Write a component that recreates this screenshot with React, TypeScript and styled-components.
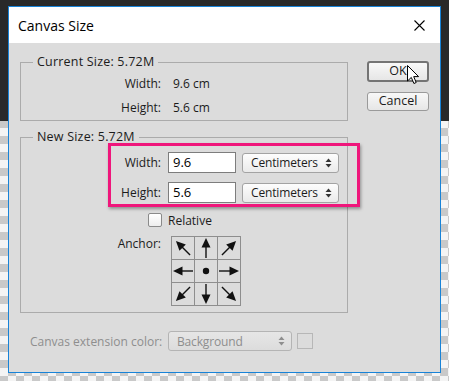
import React from 'react';
import styled, { createGlobalStyle } from 'styled-components';

const GlobalStyle = createGlobalStyle`
  html, body { margin: 0; padding: 0; }
  body { font-family: "Open Sans", "Noto Sans", sans-serif; color: #1b1b1b; }
`;

const Desktop = styled.div`
  width: 449px;
  height: 381px;
  box-sizing: border-box;
  padding: 6px 0 0 8px;
  overflow: hidden;
  background:
    linear-gradient(#292929, #292929) 0 0 / 100% 121px no-repeat,
    linear-gradient(45deg, #c9c9c9 25%, transparent 25%, transparent 75%, #c9c9c9 75%) 0 0 / 16px 16px,
    linear-gradient(45deg, #c9c9c9 25%, transparent 25%, transparent 75%, #c9c9c9 75%) 8px 8px / 16px 16px,
    #f4f4f4;
`;

const Window = styled.div`
  width: 433px;
  height: 367px;
  box-sizing: border-box;
  border: 1px solid #1883d7;
  display: flex;
  flex-direction: column;
`;

const TitleBar = styled.header`
  height: 36px;
  flex: none;
  background: #ffffff;
  display: flex;
  align-items: center;
  justify-content: space-between;
  padding: 0 15px 0 9px;
`;

const Title = styled.h1`
  margin: 0;
  font-size: 14px;
  font-weight: 400;
  color: #000;
`;

const Body = styled.section`
  flex: 1;
  position: relative;
  background: #dcdcdc;
  display: flex;
  gap: 19px;
  padding: 11px 11px 0 11px;
  font-size: 12px;
`;

const LeftCol = styled.div`
  width: 328px;
  display: flex;
  flex-direction: column;
`;

const Group = styled.fieldset<{ $top?: number }>`
  margin: ${p => p.$top ?? 0}px 0 0 0;
  padding: 0;
  border: 1px solid #ababab;
  min-width: 0;
`;

const Legend = styled.legend`
  margin-left: 12px;
  padding: 0 4px;
  line-height: 16px;
  font-size: 12.5px;
  letter-spacing: 0.2px;
`;

const InfoGrid = styled.div`
  display: grid;
  grid-template-columns: 140px auto;
  column-gap: 12px;
  grid-auto-rows: 24px;
  align-items: center;
  padding: 1px 0;
`;

const Label = styled.span`
  text-align: right;
  white-space: nowrap;
`;

const NewContent = styled.div`
  padding: 7px 0 6px 0;
  display: flex;
  flex-direction: column;
`;

const FormGrid = styled.div`
  display: grid;
  grid-template-columns: 140px auto;
  column-gap: 7px;
  row-gap: 9px;
  grid-auto-rows: 21px;
  align-items: center;
`;

const Fields = styled.div`
  display: flex;
  gap: 6px;
  align-items: center;
`;

const TextInput = styled.div`
  width: 68px;
  height: 21px;
  box-sizing: border-box;
  background: #fff;
  border: 1px solid #7d7d7d;
  padding-left: 4px;
  font-size: 13px;
  line-height: 19px;
  color: #000;
`;

const Dropdown = styled.div<{ $width: number; $disabled?: boolean }>`
  width: ${p => p.$width}px;
  height: 20px;
  box-sizing: border-box;
  border: 1px solid ${p => (p.$disabled ? '#b4b4b4' : '#a3a3a3')};
  border-radius: 3px;
  background: ${p => (p.$disabled ? 'linear-gradient(#e6e6e6, #dcdcdc)' : 'linear-gradient(#fdfdfd, #eaeaea)')};
  display: flex;
  align-items: center;
  justify-content: space-between;
  padding: 0 6px 0 8px;
  font-size: 12px;
  letter-spacing: -0.15px;
  color: ${p => (p.$disabled ? '#8e8e8e' : '#1b1b1b')};
`;

const CheckRow = styled.label`
  margin-top: 10px;
  padding-left: 127px;
  display: flex;
  align-items: center;
  gap: 6px;
  height: 14px;
`;

const CheckBox = styled.span`
  width: 14px;
  height: 14px;
  box-sizing: border-box;
  border: 1px solid #8a8a8a;
  border-radius: 2px;
  background: linear-gradient(#ffffff, #ededed);
`;

const AnchorRow = styled.div`
  margin-top: 9px;
  display: grid;
  grid-template-columns: 140px auto;
  column-gap: 10px;
  align-items: start;
`;

const AnchorLabel = styled(Label)`
  line-height: 16px;
`;

const AnchorGrid = styled.div`
  width: 70px;
  display: grid;
  grid-template-columns: repeat(3, 22px);
  grid-auto-rows: 22px;
  gap: 1px;
  padding: 1px;
  box-sizing: border-box;
  background: #8e8e8e;
`;

const AnchorCell = styled.div`
  background: #dcdcdc;
  display: flex;
  align-items: center;
  justify-content: center;
`;

const ExtensionRow = styled.div`
  margin-top: 18px;
  padding-left: 10px;
  display: flex;
  align-items: center;
  gap: 7px;
  color: #8e8e8e;
`;

const ExtLabel = styled.span`
  width: 131px;
  text-align: right;
  white-space: nowrap;
`;

const Swatch = styled.span`
  margin-left: -2px;
  width: 16px;
  height: 16px;
  box-sizing: border-box;
  border: 1px solid #b7b7b7;
`;

const ButtonCol = styled.div`
  width: 62px;
  padding-top: 7px;
  display: flex;
  flex-direction: column;
  gap: 10px;
`;

const Button = styled.button<{ $default?: boolean }>`
  height: ${p => (p.$default ? 21 : 19)}px;
  padding: 0;
  font-family: inherit;
  font-size: 12.5px;
  color: #1b1b1b;
  border: ${p => (p.$default ? '2px solid #747474' : '1px solid #9a9a9a')};
  border-radius: 3px;
  background: linear-gradient(#f8f8f8, #e6e6e6);
  line-height: 1;
`;

const Highlight = styled.div`
  position: absolute;
  left: 99px;
  top: 100px;
  width: 252px;
  height: 64px;
  box-sizing: border-box;
  border: 3px solid #ef167b;
  box-shadow: 1px 2px 3px rgba(0, 0, 0, 0.35);
  pointer-events: none;
`;

const Pointer = styled.svg`
  position: absolute;
  left: 398px;
  top: 22px;
`;

function SpinArrows({ color }: { color: string }) {
  return (
    <svg width="7" height="10" viewBox="0 0 7 10">
      <path d="M0.5 4 L3.5 0.5 L6.5 4 Z" fill={color} />
      <path d="M0.5 6 L3.5 9.5 L6.5 6 Z" fill={color} />
    </svg>
  );
}

function Arrow({ angle }: { angle: number }) {
  return (
    <svg width="22" height="22" viewBox="0 0 22 22">
      <g transform={`rotate(${angle} 11 11)`}>
        <path d="M11 1 L6.5 10.5 L15.5 10.5 Z" fill="#111" />
        <line x1="11" y1="9" x2="11" y2="21" stroke="#111" strokeWidth="1.4" />
      </g>
    </svg>
  );
}

const anchors: (number | null)[] = [-45, 0, 45, -90, null, 90, -135, 180, 135];

export default function App() {
  return (
    <>
      <GlobalStyle />
      <Desktop>
        <Window>
          <TitleBar>
            <Title>Canvas Size</Title>
            <svg width="11" height="11" viewBox="0 0 11 11">
              <path d="M0.5 0.5 L10.5 10.5 M10.5 0.5 L0.5 10.5" stroke="#000" strokeWidth="1.1" />
            </svg>
          </TitleBar>
          <Body>
            <LeftCol>
              <Group>
                <Legend>Current Size: 5.72M</Legend>
                <InfoGrid>
                  <Label>Width:</Label>
                  <span>9.6 cm</span>
                  <Label>Height:</Label>
                  <span>5.6 cm</span>
                </InfoGrid>
              </Group>
              <Group $top={8}>
                <Legend>New Size: 5.72M</Legend>
                <NewContent>
                  <FormGrid>
                    <Label>Width:</Label>
                    <Fields>
                      <TextInput>9.6</TextInput>
                      <Dropdown $width={97}>
                        Centimeters
                        <SpinArrows color="#333" />
                      </Dropdown>
                    </Fields>
                    <Label>Height:</Label>
                    <Fields>
                      <TextInput>5.6</TextInput>
                      <Dropdown $width={97}>
                        Centimeters
                        <SpinArrows color="#333" />
                      </Dropdown>
                    </Fields>
                  </FormGrid>
                  <CheckRow>
                    <CheckBox />
                    Relative
                  </CheckRow>
                  <AnchorRow>
                    <AnchorLabel>Anchor:</AnchorLabel>
                    <AnchorGrid>
                      {anchors.map((a, i) => (
                        <AnchorCell key={i}>
                          {a === null ? (
                            <svg width="8" height="8" viewBox="0 0 8 8">
                              <circle cx="4" cy="4" r="3.2" fill="#111" />
                            </svg>
                          ) : (
                            <Arrow angle={a} />
                          )}
                        </AnchorCell>
                      ))}
                    </AnchorGrid>
                  </AnchorRow>
                </NewContent>
              </Group>
              <ExtensionRow>
                <ExtLabel>Canvas extension color:</ExtLabel>
                <Dropdown $width={124} $disabled>
                  Background
                  <SpinArrows color="#8e8e8e" />
                </Dropdown>
                <Swatch />
              </ExtensionRow>
            </LeftCol>
            <ButtonCol>
              <Button $default>OK</Button>
              <Button>Cancel</Button>
            </ButtonCol>
            <Highlight />
            <Pointer width="13" height="20" viewBox="0 0 13 20">
              <path
                d="M0.5 0.5 L0.5 16 L4.3 12.4 L6.9 18.5 L9.2 17.5 L6.7 11.6 L11.6 11.6 Z"
                fill="#fff"
                stroke="#000"
                strokeWidth="1"
                strokeLinejoin="round"
              />
            </Pointer>
          </Body>
        </Window>
      </Desktop>
    </>
  );
}
